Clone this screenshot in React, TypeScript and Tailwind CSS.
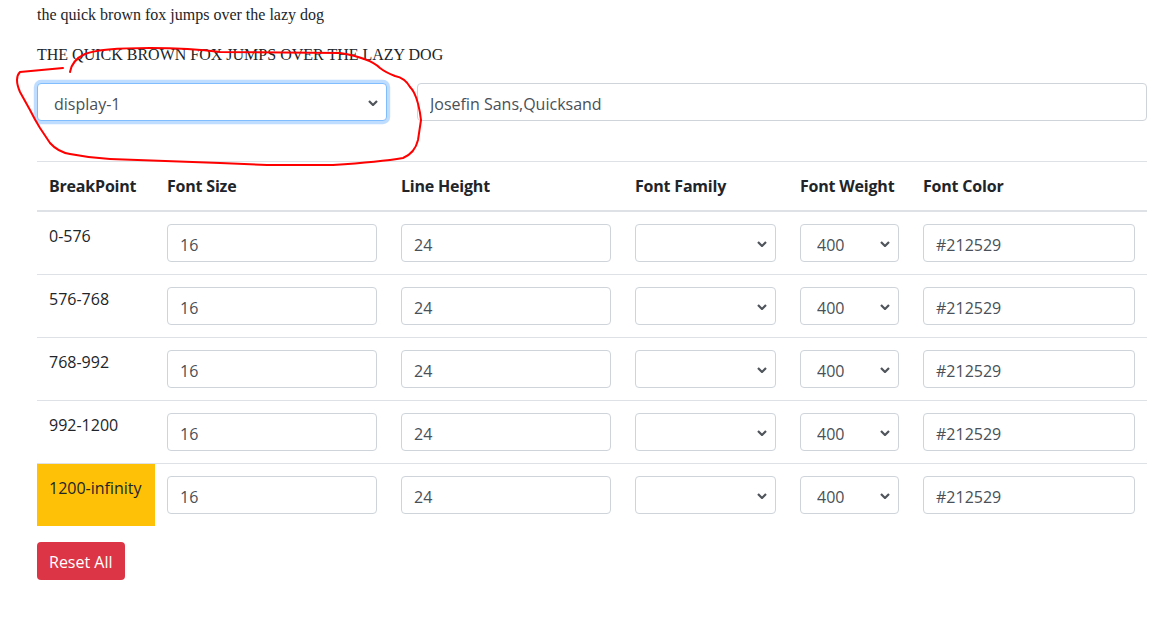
import { useState } from 'react';

const rows = ['0-576', '576-768', '768-992', '992-1200', '1200-infinity'];

function Chevron() {
  return (
    <svg className="pointer-events-none absolute right-[9px] top-1/2 -mt-[2px]" width="10" height="6" viewBox="0 0 10 6">
      <path d="M1 1 L5 5 L9 1" fill="none" stroke="#50555c" strokeWidth="2.2" />
    </svg>
  );
}

function Select({ value, className }: { value: string; className?: string }) {
  return (
    <div className={`relative ${className ?? ''}`}>
      <select
        defaultValue={value}
        className="h-[38px] w-full appearance-none rounded-[4px] border border-[#ced4da] bg-white pl-[16px] pr-6 pt-[4px] text-[16px] text-[#495057] outline-none"
      >
        <option value={value}>{value}</option>
      </select>
      <Chevron />
    </div>
  );
}

function Input({ value }: { value: string }) {
  return (
    <input
      defaultValue={value}
      className="h-[38px] w-full rounded-[4px] border border-[#ced4da] bg-white px-3 pt-[4px] text-[16px] text-[#495057] outline-none"
    />
  );
}

export default function App() {
  const [preset] = useState('display-1');

  return (
    <div className="relative min-h-[644px] bg-white font-['Open_Sans',sans-serif] text-[16px] leading-6 text-[#212529]">
      <div className="w-[1110px] ml-[37px] pt-[3px]">
        <p className="font-['Liberation_Serif',serif] mb-4">the quick brown fox jumps over the lazy dog</p>
        <p className="font-['Liberation_Serif',serif] mb-4">THE QUICK BROWN FOX JUMPS OVER THE LAZY DOG</p>

        <div className="flex gap-[30px]">
          <div className="relative w-[350px]">
            <select
              defaultValue={preset}
              className="h-[38px] w-full appearance-none rounded-[4px] border border-[#80bdff] bg-white pl-[16px] pt-[4px] text-[16px] text-[#495057] shadow-[0_0_0_3.2px_rgba(0,123,255,0.25)] outline-none"
            >
              <option value="display-1">display-1</option>
            </select>
            <Chevron />
          </div>
          <input
            defaultValue="Josefin Sans,Quicksand"
            className="h-[38px] w-[730px] rounded-[4px] border border-[#ced4da] bg-white px-3 pt-[4px] text-[16px] text-[#495057] outline-none"
          />
        </div>

        <table className="mt-10 w-full table-fixed border-collapse">
          <colgroup>
            <col className="w-[118px]" />
            <col className="w-[234px]" />
            <col className="w-[234px]" />
            <col className="w-[165px]" />
            <col className="w-[123px]" />
            <col className="w-[236px]" />
          </colgroup>
          <thead>
            <tr className="border-t border-b-2 border-[#dee2e6]">
              {['BreakPoint', 'Font Size', 'Line Height', 'Font Family', 'Font Weight', 'Font Color'].map((h) => (
                <th key={h} className="p-3 text-left align-top font-bold tracking-[-0.2px]">{h}</th>
              ))}
            </tr>
          </thead>
          <tbody>
            {rows.map((bp, i) => (
              <tr key={bp} className={i > 0 ? 'border-t border-[#dee2e6]' : ''}>
                <td className={`p-3 align-top ${i === rows.length - 1 ? 'bg-[#ffc107]' : ''}`}>{bp}</td>
                <td className="p-3 align-top"><Input value="16" /></td>
                <td className="p-3 align-top"><Input value="24" /></td>
                <td className="p-3 align-top"><Select value="" /></td>
                <td className="p-3 align-top"><Select value="400" /></td>
                <td className="p-3 align-top"><Input value="#212529" /></td>
              </tr>
            ))}
          </tbody>
        </table>

        <button className="mt-4 h-[38px] rounded-[4px] bg-[#dc3545] px-3 pt-[2px] text-[16px] text-white">Reset All</button>
      </div>

      {/* hand-drawn annotation around the preset select */}
      <svg className="pointer-events-none absolute left-0 top-0" width="440" height="180" viewBox="0 0 440 180">
        <path
          d="M63 68 L20 72 Q14 78 20 92 L30 110 Q35 120 40 128 L50 143 Q58 152 70 154 Q90 158 110 159 L220 163 L267 165 L333 165 Q380 162 403 158 Q415 153 418 140 L421 120 Q418 95 410 87 Q405 78 395 76 Q385 72 380 68 Q370 58 340 53 L220 52 Q190 48 150 48 Q100 48 85 54 Q72 60 70 72"
          fill="none"
          stroke="#ff0000"
          strokeWidth="2"
          strokeLinecap="round"
          strokeLinejoin="round"
        />
      </svg>
    </div>
  );
}
